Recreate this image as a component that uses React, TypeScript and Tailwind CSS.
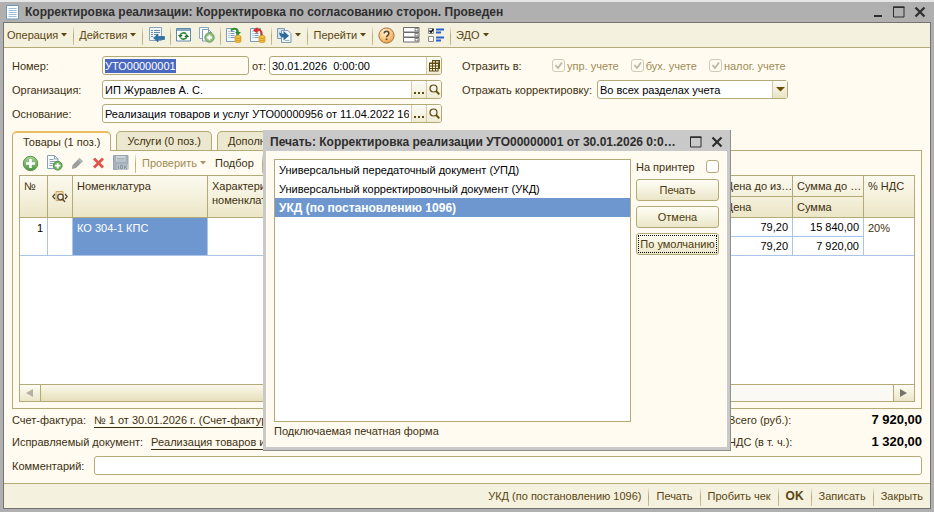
import type { ReactNode } from "react";

const FONT = "font-['Liberation_Sans',Arial,sans-serif]";

function Caret({ muted = false }: { muted?: boolean }) {
  return (
    <svg width="7" height="4" viewBox="0 0 7 4" className="shrink-0">
      <path d="M0 0h6L3 3.6z" fill={muted ? "#a3946a" : "#5c4610"} />
    </svg>
  );
}

function Divider() {
  return (
    <span className="h-[19px] w-px shrink-0 bg-linear-to-b from-[#f4f1de] via-[#b3aa78] to-[#c9c29a]" />
  );
}

function MenuButton({
  children,
  muted = false,
}: {
  children: ReactNode;
  muted?: boolean;
}) {
  return (
    <button
      type="button"
      className={`flex items-center gap-[3px] whitespace-nowrap ${muted ? "text-[#a08b55]" : ""}`}
    >
      {children}
      <Caret muted={muted} />
    </button>
  );
}

function IconButton({ label, children }: { label: string; children: ReactNode }) {
  return (
    <button type="button" aria-label={label} className="flex shrink-0 items-center">
      {children}
    </button>
  );
}

function IconGroup({ children }: { children: ReactNode }) {
  return <div className="flex items-center gap-2">{children}</div>;
}

/* ---------- icons ---------- */

function SheetLines() {
  return (
    <g transform="translate(0 1)">
      <path d="M.5 .5h10v13h-10z" fill="#f3f8fc" stroke="#7f9cb6" />
      <path d="M2.500 3.500h1M4.500 3.500h4M2.500 5.500h1M4.500 5.500h4M2.500 7.500h1M4.500 7.500h4M2.500 9.500h1M4.500 9.500h4" stroke="#7b9bb8" />
    </g>
  );
}

function DocIcon() {
  return (
    <svg width="14" height="15" viewBox="0 0 14 15">
      <path d="M.5 .5h12v13.500h-12z" fill="#fff" stroke="#6f97b6" />
      <path d="M2.500 3.500h8M2.500 5.500h8M2.500 7.500h8M2.500 9.500h8M2.500 11.500h8" stroke="#9cc0da" />
    </svg>
  );
}

function ListBackIcon() {
  return (
    <svg width="17" height="16" viewBox="0 0 17 16">
      <path d="M1.500 .5h12v13h-12z" fill="#f0f5f8" stroke="#8ba4b8" />
      <path d="M3 3.500h2M6 3.500h6M3 5.500h2M6 5.500h6M3 7.500h2M6 7.500h4M3 9.500h2" stroke="#6f8da6" />
      <path d="M5.500 11 10 7v2.500h6.500v3H10V15z" fill="#2f74a4" stroke="#1f5c88" strokeWidth=".6" />
    </svg>
  );
}

function RefreshIcon() {
  return (
    <svg width="15" height="14" viewBox="0 0 15 14">
      <path d="M.5 .5h14v12.500H.5z" fill="#fff" stroke="#5f88a8" />
      <path d="M1 1h13v2H1z" fill="#86a9c4" />
      <path d="M4.200 7a3.500 3 0 0 1 6-1M10.800 9a3.500 3 0 0 1-6 1" fill="none" stroke="#2f8a3c" strokeWidth="1.600" />
      <path d="M1.800 7h5L4.200 10zM8.200 9h5L10.800 6z" fill="#247a31" />
    </svg>
  );
}

function CopyAddIcon() {
  return (
    <svg width="16" height="16" viewBox="0 0 16 16">
      <path d="M.5 .5h9v11h-9z" fill="#f6fafc" stroke="#8aa9c0" />
      <path d="M3.500 2.500h6l3 3v8.500h-9z" fill="#fff" stroke="#7d9cb4" />
      <path d="M9.500 2.500v3h3" fill="none" stroke="#7d9cb4" />
      <circle cx="10.500" cy="10.500" r="4.700" fill="#8fbd80" stroke="#6a9a5e" />
      <path d="M10.500 7.800v5.400M7.800 10.500h5.400" stroke="#fff" strokeWidth="1.800" />
    </svg>
  );
}

function Coins() {
  return (
    <g fill="#f5c63c" stroke="#c58a1c" strokeWidth=".7">
      <ellipse cx="12" cy="14" rx="3.200" ry="1.500" />
      <ellipse cx="12" cy="12" rx="3.200" ry="1.500" />
      <ellipse cx="12" cy="10" rx="3.200" ry="1.500" />
    </g>
  );
}

function PostIcon() {
  return (
    <svg width="16" height="16" viewBox="0 0 16 16">
      <SheetLines />
      <path d="M5 3.500c3-3 7-2 7 2" fill="none" stroke="#2f8a2c" strokeWidth="1.800" />
      <path d="M9 5h6l-3 3.500z" fill="#2f8a2c" />
      <Coins />
    </svg>
  );
}

function UnpostIcon() {
  return (
    <svg width="16" height="16" viewBox="0 0 16 16">
      <SheetLines />
      <path d="M6 3c4-1 6 1 6 5.500" fill="none" stroke="#d92c1c" strokeWidth="1.800" />
      <path d="M7.500 0v6.500L3 3.200z" fill="#d92c1c" />
      <Coins />
    </svg>
  );
}

function BasedOnIcon() {
  return (
    <svg width="15" height="15" viewBox="0 0 15 15">
      <path d="M.5 .5h7v10h-7z" fill="#d5e2ec" stroke="#7d9cb4" />
      <path d="M4.500 2.500h6.500l3 3v9h-9.500z" fill="#f3f8fb" stroke="#7d9cb4" />
      <path d="M8 12.500h4.500" stroke="#9db6c8" />
      <path d="M2 4.500 6.500 6V3L12 7.700 6.500 12.400V9.500C4 9.500 2.500 7.500 2 4.500z" fill="#2c6a98" />
    </svg>
  );
}

function HelpIcon() {
  return (
    <svg width="17" height="17" viewBox="0 0 17 17">
      <defs>
        <radialGradient id="help" cx=".4" cy=".3" r=".8">
          <stop offset="0" stopColor="#fff3dc" />
          <stop offset=".5" stopColor="#fbc985" />
          <stop offset="1" stopColor="#ec9440" />
        </radialGradient>
      </defs>
      <circle cx="8.500" cy="8.500" r="7.600" fill="url(#help)" stroke="#a2703c" />
      <path d="M6.200 6.600c0-3 4.700-3 4.700 0 0 1.700-2.300 1.800-2.300 3.600" fill="none" stroke="#5d4630" strokeWidth="1.500" />
      <path d="M7.700 11.500h1.700v1.600H7.700z" fill="#5d4630" />
    </svg>
  );
}

function FieldsIcon() {
  return (
    <svg width="17" height="16" viewBox="0 0 17 16">
      {[0, 5, 10].map((y) => (
        <g key={y} transform={`translate(0 ${y})`}>
          <path d="M.5 .5h15.500v4.500H.5z" fill="#fff" stroke="#6b6b6b" />
          <path d="M11.500 1h4v3.500h-4z" fill="#8c8c8c" />
          <path d="M12.200 2h2.800l-1.400 1.800z" fill="#fff" />
        </g>
      ))}
    </svg>
  );
}

function ChecksIcon() {
  return (
    <svg width="17" height="15" viewBox="0 0 17 15">
      <path d="M.5 .5h5v5h-5zM.5 8.500h5v5h-5z" fill="#fff" stroke="#8a8a8a" />
      <path d="m1.500 2.500 1.500 1.800L5.500 1" fill="none" stroke="#111" strokeWidth="1.500" />
      <path d="M8 1.500h8M8 4.500h5M8 9.500h8M8 12.500h5" stroke="#2b62cf" strokeWidth="1.800" />
    </svg>
  );
}

function AddIcon() {
  return (
    <svg width="17" height="17" viewBox="0 0 17 17">
      <defs>
        <linearGradient id="add" x1="0" y1="0" x2="0" y2="1">
          <stop offset="0" stopColor="#a9d596" />
          <stop offset="1" stopColor="#4c9644" />
        </linearGradient>
      </defs>
      <circle cx="8.500" cy="8.500" r="7.200" fill="url(#add)" stroke="#5a8f50" />
      <path d="M8.500 4v9M4 8.500h9" stroke="#fff" strokeWidth="2.600" />
    </svg>
  );
}

function SheetAddIcon() {
  return (
    <svg width="16" height="16" viewBox="0 0 16 16">
      <path d="M.5 .5h7l3.500 3.500v9.500H.5z" fill="#f8fbfd" stroke="#86a2b8" />
      <path d="M7.500 .5V4H11M2.500 4.500h4M2.500 6.500h6M2.500 8.500h4M2.500 10.500h3" fill="none" stroke="#86a2b8" />
      <circle cx="10.700" cy="10.700" r="4.400" fill="#6fae5e" stroke="#55924a" />
      <path d="M10.700 8v5.400M8 10.700h5.400" stroke="#fff" strokeWidth="1.800" />
    </svg>
  );
}

function PencilIcon() {
  return (
    <svg width="13" height="13" viewBox="0 0 13 13">
      <path d="m.8 12 .8-4L8.500 1l3.400 3.200L5 11z" fill="#9aa09b" />
      <path d="m8.500 1 3.400 3.200-1.800 1.700L6.800 2.700z" fill="#b3b8b4" />
    </svg>
  );
}

function CrossIcon() {
  return (
    <svg width="13" height="12" viewBox="0 0 13 12">
      <path d="m2 1.500 9 9M11 1.500l-9 9" stroke="#e2564a" strokeWidth="2.800" />
    </svg>
  );
}

function DiskIcon() {
  return (
    <svg width="16" height="16" viewBox="0 0 16 16">
      <path d="M.5 .5h14.500v14H.5z" fill="#a5b0bb" stroke="#98a4b0" />
      <path d="M3 1h9.500v5.500H3z" fill="#cdd4da" />
      <path d="M4 3.500h7.500M4 5h7.500" stroke="#a5b0bb" />
      <path d="M4 9.500h11V15H4z" fill="#bcc4cc" />
      <path d="M5.500 10.500v3.500M7.500 10.500h2v3h-2zM11.500 10.500v3.500M14 10.500l-2 1.500 2 2" fill="none" stroke="#8693a0" />
    </svg>
  );
}

function PreviewIcon() {
  return (
    <svg width="16" height="14" viewBox="0 0 16 14" className="mx-auto">
      <path d="M4 1.500h7v9H4z" fill="#f4dcae" stroke="#c9a667" />
      <circle cx="8.500" cy="7" r="2.800" fill="#faf4e4" stroke="#5b4a34" strokeWidth="1.300" />
      <path d="m10.500 9 2.500 3M3 4 .8 6.500 3 9M13 4l2.200 2.500L13 9" fill="none" stroke="#5b4a34" strokeWidth="1.300" />
    </svg>
  );
}

function CalendarIcon() {
  return (
    <svg width="11" height="12" viewBox="0 0 11 12">
      <path d="M3 0h8v9H9.500v2.500H0V2.500h3z" fill="#5c4a10" />
      <path d="M4 1.200h2v1.300H4zM7 1.200h2.500v1.300H7zM1 4h2v1.500H1zM4 4h2v1.500H4zM7 4h2v1.500H7zM1 6.500h2V8H1zM4 6.500h2V8H4zM7 6.500h2V8H7zM1 9h2v1.500H1zM4 9h2v1.500H4zM7 9h1.500v1.500H7z" fill="#f5f1dc" />
    </svg>
  );
}

function LensIcon() {
  return (
    <svg width="11" height="11" viewBox="0 0 11 11">
      <circle cx="4.500" cy="4.500" r="3.500" fill="none" stroke="#5c4a10" strokeWidth="1.200" />
      <path d="m7 7 3.300 3.300" stroke="#5c4a10" strokeWidth="1.900" />
    </svg>
  );
}

function MinimizeIcon() {
  return (
    <svg width="12" height="12" viewBox="0 0 12 12">
      <path d="M2 9h8v2H2z" fill="#2e2e2e" />
    </svg>
  );
}

function MaximizeIcon() {
  return (
    <svg width="12" height="12" viewBox="0 0 12 12">
      <path d="M.5 1h10.500v10H.5z" fill="none" stroke="#2e2e2e" />
      <path d="M0 .5h11.500v1.500H0z" fill="#2e2e2e" />
    </svg>
  );
}

function CloseIcon() {
  return (
    <svg width="12" height="12" viewBox="0 0 12 12">
      <path d="m1.500 1.500 9 9M10.500 1.500l-9 9" stroke="#2e2e2e" strokeWidth="2.200" />
    </svg>
  );
}

/* ---------- form parts ---------- */

const fieldButton =
  "flex h-full w-[15px] items-center justify-center border-l border-[#d3cda6] bg-linear-to-b from-[#fdfcf5] to-[#efebd2]";

function LookupField({ id, label, value }: { id: string; label: string; value: string }) {
  return (
    <div className="flex h-[19px] items-center">
      <label htmlFor={id} className="w-[90px]">
        {label}
      </label>
      <div className="flex h-[19px] w-[340px] overflow-hidden rounded-[3px] border border-[#b3aa78] bg-white">
        <input id={id} defaultValue={value} className="min-w-0 flex-1 px-[2px] text-black outline-none" />
        <button type="button" aria-label={`${label} выбрать`} className={fieldButton}>
          <svg width="10" height="10" viewBox="0 0 10 10">
            <path d="M0 7h2v2H0zM4 7h2v2H4zM8 7h2v2H8z" fill="#5c4a10" />
          </svg>
        </button>
        <button type="button" aria-label={`${label} открыть`} className={fieldButton}>
          <LensIcon />
        </button>
      </div>
    </div>
  );
}

function AccountingCheck({ label }: { label: string }) {
  return (
    <label className="flex items-center gap-[2px] text-[#a08b55]">
      <span className="relative flex">
        <input
          type="checkbox"
          defaultChecked
          disabled
          className="size-[13px] appearance-none rounded-[3px] border border-[#cfcbb4] bg-[#fdfbf0]"
        />
        <svg width="13" height="13" viewBox="0 0 13 13" className="absolute inset-0">
          <path d="m3.500 6 2.500 3 4-5.500" fill="none" stroke="#bdb9a6" strokeWidth="1.800" />
        </svg>
      </span>
      {label}
    </label>
  );
}

function PushButton({ children, focused = false }: { children: ReactNode; focused?: boolean }) {
  return (
    <button
      type="button"
      className="h-[22px] rounded-[3px] border border-[#b3aa78] bg-linear-to-b from-[#fffef6] to-[#ebe6c8] p-px text-[#4d3a0c]"
    >
      <span
        className={`flex h-full items-center justify-center whitespace-nowrap border border-dotted ${focused ? "border-black" : "border-transparent"}`}
      >
        {children}
      </span>
    </button>
  );
}

const th = "border-b border-[#b3aa78] px-1 pt-[3px] text-left align-top font-normal";
const td = "border-r border-b border-[#aac5ea] px-1 text-black";

function GoodsTable() {
  return (
    <table className="w-full table-fixed border-separate border-spacing-0">
      <colgroup>
        <col className="w-[28px]" />
        <col className="w-[25px]" />
        <col className="w-[135px]" />
        <col className="w-[150px]" />
        <col />
        <col className="w-[72px]" />
        <col className="w-[71px]" />
        <col className="w-[50px]" />
      </colgroup>
      <thead className="bg-linear-to-b from-[#fcfaf0] to-[#ece6c6]">
        <tr className="h-[21px]">
          <th rowSpan={2} className={`${th} border-r`}>№</th>
          <th rowSpan={2} aria-label="Просмотр" className="border-r border-b border-[#b3aa78] align-middle">
            <PreviewIcon />
          </th>
          <th rowSpan={2} className={`${th} border-r`}>Номенклатура</th>
          <th rowSpan={2} className={`${th} border-r`}>Характеристика номенклатуры</th>
          <th rowSpan={2} className={`${th} border-r`} />
          <th className={`${th} border-r whitespace-nowrap`}>Цена до из…</th>
          <th className={`${th} border-r whitespace-nowrap`}>Сумма до …</th>
          <th rowSpan={2} className={th}>% НДС</th>
        </tr>
        <tr className="h-[21px]">
          <th className={`${th} border-r`}>Цена</th>
          <th className={`${th} border-r`}>Сумма</th>
        </tr>
      </thead>
      <tbody>
        <tr className="h-[19px]">
          <td rowSpan={2} className={`${td} pt-[3px] text-right align-top`}>1</td>
          <td rowSpan={2} className={td} />
          <td rowSpan={2} className="border-r border-b border-[#aac5ea] bg-[#6e97cf] px-1 pt-[3px] align-top text-white">
            КО 304-1 КПС
          </td>
          <td rowSpan={2} className={td} />
          <td rowSpan={2} className={td} />
          <td className={`${td} text-right`}>79,20</td>
          <td className={`${td} text-right`}>15 840,00</td>
          <td rowSpan={2} className="border-b border-[#aac5ea] px-1 pt-[3px] align-top text-[#3d3010]">20%</td>
        </tr>
        <tr className="h-[19px]">
          <td className={`${td} text-right`}>79,20</td>
          <td className={`${td} text-right`}>7 920,00</td>
        </tr>
      </tbody>
    </table>
  );
}

const scrollButton =
  "flex w-[21px] items-center justify-center bg-linear-to-b from-[#fdfcf5] to-[#ebe6c8]";

function ScrollBar() {
  return (
    <div className="flex h-[17px] border-t border-[#b3aa78]">
      <button type="button" aria-label="Влево" className={`${scrollButton} border-r border-[#b3aa78]`}>
        <svg width="8" height="8" viewBox="0 0 8 8">
          <path d="M7 0v8L0 4z" fill="#b5b0a0" />
        </svg>
      </button>
      <div className="w-[600px] border-r border-[#b3aa78] bg-linear-to-b from-[#faf8ea] to-[#e6dfba]" />
      <div className="flex-1 bg-[#faf9f3]" />
      <button type="button" aria-label="Вправо" className={`${scrollButton} border-l border-[#b3aa78]`}>
        <svg width="8" height="8" viewBox="0 0 8 8">
          <path d="M0 0v8l7-4z" fill="#77736a" />
        </svg>
      </button>
    </div>
  );
}

function PrintDialog() {
  return (
    <section
      role="dialog"
      aria-labelledby="print-title"
      className="absolute top-[128px] left-[263px] flex h-[321px] w-[468px] flex-col border-r border-b border-[#8f8f8f] bg-[#c9c9c9] px-[3px] pb-[3px]"
    >
      <header className="flex h-[21px] items-center gap-[9px] px-1 pt-[2px]">
        <h2 id="print-title" className="min-w-0 flex-1 text-[12px] font-bold whitespace-nowrap text-[#2e2e2e]">
          Печать: Корректировка реализации УТО00000001 от 30.01.2026 0:0…
        </h2>
        <IconButton label="Развернуть"><MaximizeIcon /></IconButton>
        <IconButton label="Закрыть"><CloseIcon /></IconButton>
      </header>
      <div className="flex min-h-0 flex-1 flex-col bg-[#fffbf0] p-2">
        <div className="flex min-h-0 flex-1 gap-[5px]">
          <ul className="flex-1 border border-[#b3aa78] bg-white text-black">
            <li className="flex h-[19px] items-center px-1">Универсальный передаточный документ (УПД)</li>
            <li className="flex h-[19px] items-center px-1">Универсальный корректировочный документ (УКД)</li>
            <li className="flex h-[19px] items-center bg-[#6e97cf] px-1 text-[12px] font-bold text-white">
              УКД (по постановлению 1096)
            </li>
          </ul>
          <div className="flex w-[83px] flex-col gap-[5px]">
            <label className="flex h-[15px] items-center justify-between">
              На принтер
              <input
                type="checkbox"
                className="size-[13px] appearance-none rounded-[3px] border border-[#b3aa78] bg-white"
              />
            </label>
            <PushButton>Печать</PushButton>
            <PushButton>Отмена</PushButton>
            <PushButton focused>По умолчанию</PushButton>
          </div>
        </div>
        <p className="pt-[1px] leading-4">Подключаемая печатная форма</p>
      </div>
    </section>
  );
}

const tab = "flex h-[19px] items-center rounded-t-[5px] border border-b-0 border-[#b3aa78] px-[10px] whitespace-nowrap";

export default function App() {
  return (
    <div
      className={`relative flex h-screen flex-col border-t-2 border-t-[#e6e8e8] bg-[#b0b0b0] px-[3px] pb-[3px] text-[11px] leading-[14px] text-[#3d3010] ${FONT}`}
    >
      <header className="flex h-[20px] shrink-0 items-center gap-[9px] px-[3px] pr-[5px]">
        <div className="flex min-w-0 flex-1 items-center gap-[5px]">
          <DocIcon />
          <h1 className="truncate text-[12px] font-bold text-[#2e2e2e]">
            Корректировка реализации: Корректировка по согласованию сторон. Проведен
          </h1>
        </div>
        <IconButton label="Свернуть"><MinimizeIcon /></IconButton>
        <IconButton label="Развернуть"><MaximizeIcon /></IconButton>
        <IconButton label="Закрыть"><CloseIcon /></IconButton>
      </header>

      <main className="flex min-h-0 flex-1 flex-col border border-[#747474] bg-[#fffbf0]">
        <nav className="flex h-[25px] shrink-0 items-center gap-[5px] border-b border-[#b3aa78] bg-[#f4f1de] px-[3px] text-[#5c4610]">
          <MenuButton>Операция</MenuButton>
          <Divider />
          <MenuButton>Действия</MenuButton>
          <Divider />
          <IconButton label="Показать в списке"><ListBackIcon /></IconButton>
          <Divider />
          <IconGroup>
            <IconButton label="Перечитать"><RefreshIcon /></IconButton>
            <IconButton label="Скопировать"><CopyAddIcon /></IconButton>
          </IconGroup>
          <Divider />
          <IconGroup>
            <IconButton label="Провести"><PostIcon /></IconButton>
            <IconButton label="Отмена проведения"><UnpostIcon /></IconButton>
          </IconGroup>
          <Divider />
          <MenuButton><BasedOnIcon /></MenuButton>
          <Divider />
          <MenuButton>Перейти</MenuButton>
          <Divider />
          <IconGroup>
            <IconButton label="Справка"><HelpIcon /></IconButton>
            <IconButton label="Реквизиты"><FieldsIcon /></IconButton>
            <IconButton label="Настройки"><ChecksIcon /></IconButton>
          </IconGroup>
          <Divider />
          <MenuButton>ЭДО</MenuButton>
        </nav>

        <div className="flex min-h-0 flex-1 flex-col px-2 pt-2">
          <div className="flex shrink-0 gap-5">
            <div className="flex flex-col gap-[5px]">
              <div className="flex h-[19px] items-center">
                <label htmlFor="number" className="w-[90px]">Номер:</label>
                <div className="flex h-[19px] w-[147px] items-center rounded-[3px] border border-[#b3aa78] bg-[#fffbf0] px-[2px]">
                  <input
                    id="number"
                    defaultValue="УТО00000001"
                    className="w-[71px] bg-[#4a68c0] text-white outline-none"
                  />
                </div>
                <label htmlFor="date" className="w-[20px] pl-[3px]">от:</label>
                <div className="flex h-[19px] flex-1 overflow-hidden rounded-[3px] border border-[#b3aa78] bg-white">
                  <input id="date" defaultValue="30.01.2026  0:00:00" className="min-w-0 flex-1 px-[2px] text-black outline-none" />
                  <button type="button" aria-label="Календарь" className={fieldButton}>
                    <CalendarIcon />
                  </button>
                </div>
              </div>
              <LookupField id="company" label="Организация:" value="ИП Журавлев А. С." />
              <LookupField
                id="basis"
                label="Основание:"
                value="Реализация товаров и услуг УТО00000956 от 11.04.2022 16"
              />
            </div>

            <div className="flex flex-col gap-[5px]">
              <div className="flex h-[19px] items-center">
                <span className="w-[90px]">Отразить в:</span>
                <div className="flex gap-3">
                  <AccountingCheck label="упр. учете" />
                  <AccountingCheck label="бух. учете" />
                  <AccountingCheck label="налог. учете" />
                </div>
              </div>
              <div className="flex h-[19px] items-center">
                <label htmlFor="mode" className="w-[135px]">Отражать корректировку:</label>
                <div className="relative w-[191px]">
                  <select
                    id="mode"
                    className="block h-[19px] w-full appearance-none rounded-[3px] border border-[#b3aa78] bg-white px-[2px] text-black"
                  >
                    <option>Во всех разделах учета</option>
                  </select>
                  <span className="pointer-events-none absolute inset-y-px right-px flex w-[15px] items-center justify-center border-l border-[#d3cda6] bg-linear-to-b from-[#fdfcf5] to-[#e8e3c4]">
                    <svg width="9" height="5" viewBox="0 0 9 5">
                      <path d="M0 0h9L4.500 4.500z" fill="#6b4f05" />
                    </svg>
                  </span>
                </div>
              </div>
            </div>
          </div>

          <div role="tablist" className="mt-2 flex shrink-0 gap-[5px]">
            <button
              type="button"
              role="tab"
              aria-selected
              className={`${tab} relative z-10 -mb-px h-[20px] border-t-2 border-t-[#ebbd62] bg-[#fffbf0]`}
            >
              Товары (1 поз.)
            </button>
            <button type="button" role="tab" className={`${tab} bg-[#ece8cf]`}>Услуги (0 поз.)</button>
            <button type="button" role="tab" className={`${tab} bg-[#ece8cf]`}>Дополнительно</button>
          </div>

          <div className="flex min-h-0 flex-1 flex-col border border-[#b3aa78] px-[6px] pb-[6px]">
            <div className="flex h-[24px] shrink-0 items-center gap-[6px] px-[3px]">
              <IconGroup>
                <IconButton label="Добавить"><AddIcon /></IconButton>
                <IconButton label="Добавить копированием"><SheetAddIcon /></IconButton>
                <IconButton label="Изменить"><PencilIcon /></IconButton>
                <IconButton label="Удалить"><CrossIcon /></IconButton>
                <IconButton label="Закончить редактирование"><DiskIcon /></IconButton>
              </IconGroup>
              <Divider />
              <MenuButton muted>Проверить</MenuButton>
              <button type="button" className="px-[2px]">Подбор</button>
              <Divider />
            </div>
            <div className="flex min-h-0 flex-1 flex-col border border-[#b3aa78] bg-white">
              <div className="min-h-0 flex-1 overflow-hidden">
                <GoodsTable />
              </div>
              <ScrollBar />
            </div>
          </div>

          <div className="flex h-[22px] shrink-0 items-center gap-2">
            <span>Счет-фактура:</span>
            <a href="#invoice" className="flex-1 border-b border-[#3d3010] whitespace-nowrap">
              № 1 от 30.01.2026 г. (Счет-фактура выданный)
            </a>
            <div className="flex w-[194px] justify-between">
              <span>Всего (руб.):</span>
              <b className="text-[13px] text-black">7 920,00</b>
            </div>
          </div>
          <div className="flex h-[22px] shrink-0 items-center gap-2">
            <span>Исправляемый документ:</span>
            <a href="#source" className="flex-1 border-b border-[#3d3010] whitespace-nowrap">
              Реализация товаров и услуг УТО00000956
            </a>
            <div className="flex w-[194px] justify-between">
              <span>НДС (в т. ч.):</span>
              <b className="text-[13px] text-black">1 320,00</b>
            </div>
          </div>
          <div className="mt-[3px] mb-2 flex shrink-0 items-center">
            <label htmlFor="comment" className="w-[82px]">Комментарий:</label>
            <input
              id="comment"
              className="h-[19px] min-w-0 flex-1 rounded-[3px] border border-[#b3aa78] bg-white px-[2px] outline-none"
            />
          </div>
        </div>

        <footer className="flex h-[25px] shrink-0 items-center justify-end gap-[7px] border-t border-[#b3aa78] bg-[#f4f1de] px-[7px] text-[#5c4610]">
          <button type="button">УКД (по постановлению 1096)</button>
          <Divider />
          <button type="button">Печать</button>
          <Divider />
          <button type="button">Пробить чек</button>
          <Divider />
          <button type="button" className="text-[12px] font-bold">OK</button>
          <Divider />
          <button type="button">Записать</button>
          <Divider />
          <button type="button">Закрыть</button>
        </footer>
      </main>

      <PrintDialog />
    </div>
  );
}
